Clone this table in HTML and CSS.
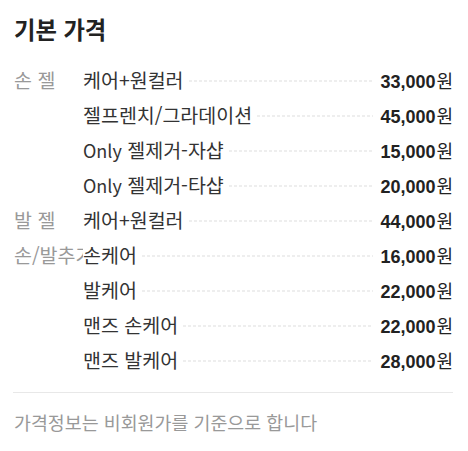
FILE: index.html
```html
<!DOCTYPE html>
<html lang="ko">
<head>
<meta charset="utf-8">
<link rel="stylesheet" href="styles.css">
</head>
<body>
<div class="panel">
  <h2 class="title">기본 가격</h2>
  <div class="list">
    <div class="row"><div class="cat">손 젤</div><div class="item">케어+원컬러</div><div class="dots"></div><div class="price"><b>33,000</b><span>원</span></div></div>
    <div class="row"><div class="cat"></div><div class="item">젤프렌치/그라데이션</div><div class="dots"></div><div class="price"><b>45,000</b><span>원</span></div></div>
    <div class="row"><div class="cat"></div><div class="item"><span class="en">Only</span> 젤제거-자샵</div><div class="dots"></div><div class="price"><b>15,000</b><span>원</span></div></div>
    <div class="row"><div class="cat"></div><div class="item"><span class="en">Only</span> 젤제거-타샵</div><div class="dots"></div><div class="price"><b>20,000</b><span>원</span></div></div>
    <div class="row"><div class="cat">발 젤</div><div class="item">케어+원컬러</div><div class="dots"></div><div class="price"><b>44,000</b><span>원</span></div></div>
    <div class="row"><div class="cat">손/발추가</div><div class="item">손케어</div><div class="dots"></div><div class="price"><b>16,000</b><span>원</span></div></div>
    <div class="row"><div class="cat"></div><div class="item">발케어</div><div class="dots"></div><div class="price"><b>22,000</b><span>원</span></div></div>
    <div class="row"><div class="cat"></div><div class="item">맨즈 손케어</div><div class="dots"></div><div class="price"><b>22,000</b><span>원</span></div></div>
    <div class="row"><div class="cat"></div><div class="item">맨즈 발케어</div><div class="dots"></div><div class="price"><b>28,000</b><span>원</span></div></div>
  </div>
  <div class="divider"></div>
  <p class="note">가격정보는 비회원가를 기준으로 합니다</p>
</div>
</body>
</html>
```

FILE: styles.css
```css
html, body {
  margin: 0;
  padding: 0;
  background: #fff;
}
body {
  font-family: "Noto Sans CJK KR", "Noto Sans", sans-serif;
  color: #333;
}
.panel {
  padding: 13px 15px 0 13px;
}
.title {
  margin: 0 0 0 1px;
  font-size: 23.3px;
  font-weight: 700;
  line-height: 32px;
  color: #222;
}
.list {
  margin-top: 17px;
  display: flex;
  flex-direction: column;
}
.row {
  display: flex;
  align-items: center;
  height: 35px;
}
.cat {
  flex: 0 0 70px;
  width: 70px;
  overflow: hidden;
  white-space: nowrap;
  font-size: 19.5px;
  color: #999;
  padding-left: 1px;
  box-sizing: border-box;
}
.item {
  flex: 0 0 auto;
  white-space: nowrap;
  font-size: 19.5px;
  color: #333;
}
.item .en {
  font-size: 18px;
}
.dots {
  flex: 1 1 auto;
  height: 2px;
  margin: 3px 7px 0 5px;
  background: repeating-linear-gradient(to right, #eee 0 3px, transparent 3px 5px);
}
.price {
  flex: 0 0 auto;
  display: flex;
  align-items: baseline;
  white-space: nowrap;
}
.price b {
  font-family: "Liberation Sans", Arial, sans-serif;
  font-weight: 700;
  font-size: 18px;
  color: #222;
}
.price span {
  font-size: 18px;
  color: #222;
  margin-left: 1px;
}
.divider {
  margin-top: 15px;
  height: 1px;
  background: #e8e8e8;
}
.note {
  margin: 17px 0 0 1px;
  font-size: 18.4px;
  line-height: 24px;
  color: #999;
}
```
